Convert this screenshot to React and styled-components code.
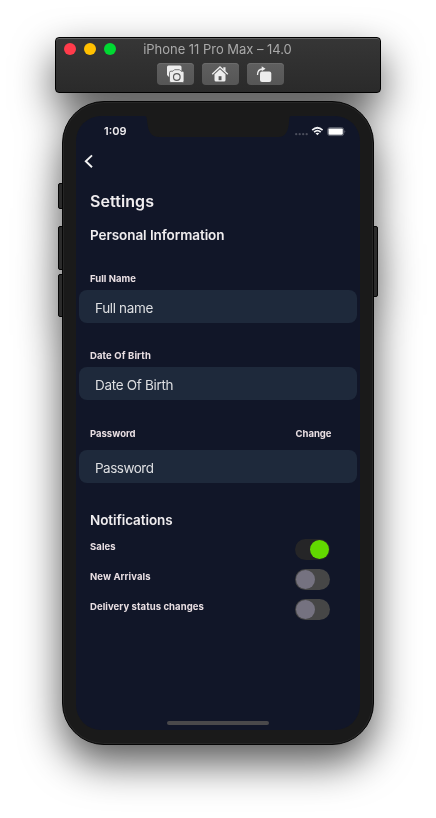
import React from "react";
import styled, { createGlobalStyle } from "styled-components";

const GlobalStyle = createGlobalStyle`
  * { box-sizing: border-box; }
  html, body { margin: 0; background: #fff; }
  body { font-family: Inter, "Liberation Sans", sans-serif; -webkit-font-smoothing: antialiased; }
  button { font: inherit; border: 0; padding: 0; background: none; }
`;

const Desktop = styled.main`
  width: 436px;
  height: 818px;
  overflow: hidden;
  padding: 37px 55px 0;
  background: #fff;
`;

const Simulator = styled.div`
  display: flex;
  flex-direction: column;
  align-items: center;
  gap: 8px;
  filter: drop-shadow(0 18px 20px rgba(0, 0, 0, 0.66));
`;

const TitleBar = styled.header`
  width: 326px;
  height: 56px;
  border: 1px solid #000;
  border-radius: 4px;
  background: linear-gradient(#363636, #2a2a2a);
  box-shadow: inset 0 1px 0 #636363;
`;

const TitleRow = styled.div`
  display: grid;
  grid-template-columns: 60px 1fr 60px;
  align-items: center;
  height: 22px;
`;

const Lights = styled.div`
  display: flex;
  gap: 8px;
  padding-left: 8px;
`;

const Light = styled.span`
  width: 12px;
  height: 12px;
  flex: none;
  border-radius: 50%;
  background: ${(p) => p.$color};
`;

const WindowTitle = styled.h1`
  margin: 0 0 0 -1px;
  text-align: center;
  font-size: 13px;
  font-weight: 400;
  line-height: 22px;
  letter-spacing: ${(p) => p.$spacing}px;
  white-space: nowrap;
  color: #a9a9a9;
`;

const Toolbar = styled.div`
  display: flex;
  justify-content: center;
  gap: 8px;
  padding: 3px 0 0 4px;
`;

const ToolButton = styled.button`
  display: flex;
  align-items: center;
  justify-content: center;
  width: 37px;
  height: 22px;
  border-radius: 4px;
  background: linear-gradient(#5f5f5f, #565656);
  box-shadow: inset 0 1px 0 #6b6b6b;
`;

const Phone = styled.section`
  position: relative;
  width: 312px;
  height: 644px;
`;

const SideKey = styled.i`
  position: absolute;
  ${(p) => p.$side}: ${(p) => (p.$side === "left" ? -4.5 : -4)}px;
  top: ${(p) => p.$top}px;
  width: 9px;
  height: ${(p) => p.$height}px;
  border: 1.5px solid #060606;
  border-radius: 2px;
  background: #2c2c2c;
`;

const Casing = styled.div`
  position: relative;
  width: 312px;
  height: 644px;
  padding: 14px 13px 14px;
  border: 1px solid #050505;
  border-radius: 42px;
  background: #1a1a1a;
  box-shadow: inset 0 0 0 1px #262626;
`;

const Screen = styled.div`
  display: flex;
  flex-direction: column;
  width: 284px;
  height: 614px;
  overflow: hidden;
  border-radius: 25px;
  background: #111628;
  color: #f0edef;
`;

const StatusBar = styled.div`
  display: grid;
  grid-template-columns: 69px 146px 69px;
  height: 30px;
  flex: none;
`;

const Clock = styled.time`
  padding: 8px 0 0 28px;
  font-size: 11px;
  font-weight: 600;
  line-height: 15px;
  white-space: nowrap;
  letter-spacing: ${(p) => p.$spacing}px;
`;

const NotchShape = styled.svg`
  display: block;
`;

const StatusIcons = styled.svg`
  display: block;
  margin-left: 3px;
`;

const BackButton = styled.button`
  display: flex;
  flex: none;
  width: 16px;
  height: 16px;
  margin: 7px 0 0 6px;
`;

const Heading = styled.h2`
  flex: none;
  height: ${(p) => p.$height}px;
  margin: ${(p) => p.$top}px 0 0 14px;
  font-size: ${(p) => p.$size}px;
  font-weight: 600;
  line-height: ${(p) => p.$height}px;
  letter-spacing: ${(p) => p.$spacing}px;
  white-space: nowrap;
`;

const Field = styled.div`
  display: flex;
  flex: none;
  flex-direction: column;
  gap: ${(p) => p.$gap}px;
  margin: ${(p) => p.$top}px 3px 0;
`;

const FieldHead = styled.div`
  display: grid;
  grid-template-columns: 205.5px 1fr;
  height: 14px;
  padding-left: 11px;
`;

const Label = styled.span`
  font-size: 9.5px;
  font-weight: 650;
  line-height: 14px;
  letter-spacing: ${(p) => p.$spacing}px;
  white-space: nowrap;
  color: #e9dfe3;
`;

const Input = styled.div`
  height: 33px;
  padding: 2px 0 0 16px;
  border-radius: 8px;
  background: #1e293b;
  font-size: 13.5px;
  line-height: 33px;
  letter-spacing: ${(p) => p.$spacing}px;
  color: #dedfe2;
`;

const SwitchList = styled.div`
  display: flex;
  flex: none;
  flex-direction: column;
  gap: 9px;
  margin: 9px 0 0 14px;
`;

const SwitchRow = styled.div`
  display: grid;
  grid-template-columns: 205.5px 35px;
  height: 21px;
`;

const SwitchLabel = styled(Label)`
  padding-top: 1px;
`;

const Switch = styled.span`
  display: flex;
  align-items: center;
  justify-content: ${(p) => (p.$on ? "flex-end" : "flex-start")};
  height: 21px;
  padding: 1px;
  border-radius: 11px;
  margin: 0 0.5px 0 -0.5px;
  background: ${(p) => (p.$on ? "#252527" : "#464646")};
`;

const Knob = styled.i`
  width: 19px;
  height: 19px;
  border-radius: 50%;
  background: ${(p) => (p.$on ? "#62d900" : "#757280")};
`;

const HomeIndicator = styled.div`
  flex: none;
  width: 102px;
  height: 4px;
  margin: auto auto 5px;
  border-radius: 2px;
  background: #4a494b;
`;

const lights = ["#ff3b4b", "#ffc000", "#00d932"];
const notifications = [
  { label: "Sales", on: true },
  { label: "New Arrivals", on: false },
  { label: "Delivery status changes", on: false },
];

const CameraIcon = () => (
  <svg width="19" height="18" viewBox="0 0 19 18">
    <path d="M2.5 0.5h11.5a1.5 1.5 0 0 1 1.5 1.5v5h-6L7 9 4 10v2H3L1 10V2A1.5 1.5 0 0 1 2.5.5Z" fill="#ededed" />
    <path d="M5 6.2h2L8.5 4.7h5L15 6.2h1.5A1.5 1.5 0 0 1 18 7.7V16a1.5 1.5 0 0 1-1.5 1.5H5A1.5 1.5 0 0 1 3.5 16V7.7A1.5 1.5 0 0 1 5 6.2Z" fill="#ededed" stroke="#5b5b5b" strokeWidth=".8" />
    <circle cx="10.8" cy="12" r="3.3" fill="#ededed" stroke="#5b5b5b" strokeWidth="1.2" />
  </svg>
);

const HomeIcon = () => (
  <svg width="18" height="18" viewBox="0 0 18 18">
    <path d="M1.2 9.3 9 2l7.8 7.3" fill="none" stroke="#ededed" strokeWidth="1.3" />
    <path d="M12.3 2.3h2.2v4.2l-2.2-2Z" fill="#ededed" />
    <path d="M3.5 9.3 9 4.3l5.5 5V15a1.5 1.5 0 0 1-1.5 1.5H5A1.5 1.5 0 0 1 3.5 15Z" fill="#ededed" />
    <rect x="7.6" y="11.2" width="2.9" height="4" fill="#5a5a5a" />
  </svg>
);

const RotateIcon = () => (
  <svg width="19" height="18" viewBox="0 0 19 18">
    <rect x="4" y="6.5" width="11.3" height="10.5" rx="2" fill="#ededed" />
    <path d="M1.5 10C1.5 6 3 4.2 6.5 4" fill="none" stroke="#ededed" strokeWidth="1.3" />
    <path d="M5.7 1.2 9.5 3.8 5.7 6.3Z" fill="#ededed" />
  </svg>
);

const Notch = () => (
  <NotchShape width="146" height="30" viewBox="0 0 146 30">
    <path d="M0 0C1.5 0.5 2 2 2.2 6C3 15 6 21 14 21H134C140 21 143.5 15 144 6C144.2 2 144.5 0.5 146 0Z" fill="#1a1a1a" />
  </NotchShape>
);

const StatusGlyphs = () => (
  <StatusIcons width="55" height="24" viewBox="0 0 55 24">
    <g fill="#4b4e5c">
      <circle cx="2.2" cy="18.2" r="1.15" />
      <circle cx="5.7" cy="18.2" r="1.15" />
      <circle cx="9.2" cy="18.2" r="1.15" />
      <circle cx="12.7" cy="18.2" r="1.15" />
    </g>
    <g fill="none" stroke="#f0f1f4" strokeWidth="1.7">
      <path d="M18.2 14.1Q23.4 9.4 28.6 14.1" />
      <path d="M20.1 16.2Q23.4 13.2 26.7 16.2" />
    </g>
    <path d="M21.5 17.3Q23.4 16 25.3 17.3L23.4 19.3Z" fill="#f0f1f4" />
    <rect x="33.7" y="11.6" width="16" height="8" rx="2.2" fill="none" stroke="#70737f" strokeWidth=".8" />
    <rect x="34.5" y="12.4" width="14.3" height="6.4" rx="1.2" fill="#fff" />
    <path d="M50.5 14.2Q52.2 15.5 50.5 17Z" fill="#70737f" />
  </StatusIcons>
);

export default function App() {
  return (
    <Desktop>
      <GlobalStyle />
      <Simulator>
        <TitleBar>
          <TitleRow>
            <Lights>{lights.map((c) => <Light key={c} $color={c} />)}</Lights>
            <WindowTitle $spacing={-0.03}>iPhone 11 Pro Max – 14.0</WindowTitle>
          </TitleRow>
          <Toolbar>
            <ToolButton aria-label="Screenshot"><CameraIcon /></ToolButton>
            <ToolButton aria-label="Home"><HomeIcon /></ToolButton>
            <ToolButton aria-label="Rotate"><RotateIcon /></ToolButton>
          </Toolbar>
        </TitleBar>
        <Phone>
          <SideKey $side="left" $top={82} $height={26} />
          <SideKey $side="left" $top={125} $height={44} />
          <SideKey $side="left" $top={173} $height={43} />
          <SideKey $side="right" $top={125} $height={71} />
          <Casing>
            <Screen>
              <StatusBar>
                <Clock $spacing={0}>1:09</Clock>
                <Notch />
                <StatusGlyphs />
              </StatusBar>
              <BackButton aria-label="Back">
                <svg width="16" height="16" viewBox="0 0 16 16">
                  <path d="M10 2.4 3.8 8.2 10 14.2" fill="none" stroke="#f2f2f2" strokeWidth="1.9" />
                </svg>
              </BackButton>
              <Heading $top={22} $height={20} $size={16} $spacing={0.08}>Settings</Heading>
              <Heading $top={14} $height={20} $size={13.5} $spacing={-0.07}>Personal Information</Heading>
              <Field $top={26.5} $gap={4}>
                <FieldHead><Label $spacing={0.02}>Full Name</Label></FieldHead>
                <Input $spacing={-0.35}>Full name</Input>
              </Field>
              <Field $top={26} $gap={4}>
                <FieldHead><Label $spacing={0.12}>Date Of Birth</Label></FieldHead>
                <Input $spacing={-0.31}>Date Of Birth</Input>
              </Field>
              <Field $top={27} $gap={9}>
                <FieldHead>
                  <Label $spacing={0}>Password</Label>
                  <Label $spacing={0}>Change</Label>
                </FieldHead>
                <Input $spacing={-0.5}>Password</Input>
              </Field>
              <Heading $top={27} $height={20} $size={13.5} $spacing={-0.08}>Notifications</Heading>
              <SwitchList>
                {notifications.map((n) => (
                  <SwitchRow key={n.label}>
                    <SwitchLabel $spacing={0.08}>{n.label}</SwitchLabel>
                    <Switch $on={n.on}><Knob $on={n.on} /></Switch>
                  </SwitchRow>
                ))}
              </SwitchList>
              <HomeIndicator />
            </Screen>
          </Casing>
        </Phone>
      </Simulator>
    </Desktop>
  );
}
